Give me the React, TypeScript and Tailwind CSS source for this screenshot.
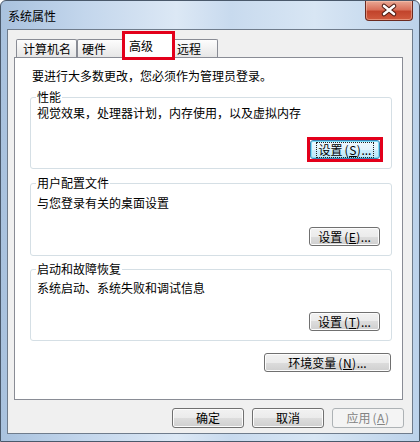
import React from 'react';

const font = "font-['Noto_Sans_CJK_SC','Noto_Sans',sans-serif]";

const btnBase =
  'flex items-center justify-center h-[19px] rounded-[3px] border text-[12px] leading-none';
const btnNormal =
  'border-[#707070] bg-[linear-gradient(#f2f2f2_0%,#ebebeb_50%,#dddddd_50%,#cfcfcf_100%)] shadow-[inset_0_0_0_1px_#fcfcfc] text-black';

const Button: React.FC<{ children: React.ReactNode; className?: string }> = ({ children, className = '' }) => (
  <div className={`${btnBase} ${btnNormal} ${className}`}>{children}</div>
);

const Key: React.FC<{ k: string }> = ({ k }) => (
  <span className="ml-[2px] tracking-[0.5px]">
    (<span className="underline underline-offset-1">{k}</span>)
  </span>
);

const Group: React.FC<{
  title: string;
  desc: string;
  className: string;
  descClass: string;
  children: React.ReactNode;
}> = ({ title, desc, className, descClass, children }) => (
  <fieldset className={`ml-[15px] mr-[10px] pl-[5px] border border-[#d5dfe5] rounded-[3px] ${className}`}>
    <legend className="px-[1px] text-[12px] leading-[14px] text-black">{title}</legend>
    <div className={`pl-[1px] text-[12px] leading-[13px] text-black ${descClass}`}>{desc}</div>
    {children}
  </fieldset>
);

export default function App() {
  return (
    <div
      className={`${font} w-[420px] h-[442px] flex flex-col rounded-t-[6px] border border-[#4a596b] bg-[linear-gradient(to_right,#a9c2de_0%,#c3d6ec_20%,#dce8f5_42%,#c8daee_55%,#d8e6f4_75%,#bcd2ea_100%)]`}
    >
      {/* title bar */}
      <div className="h-[28px] flex items-start justify-between">
        <span className="self-center pl-[7px] pt-[1px] text-[12px] leading-[14px] text-black">系统属性</span>
        <div className="mr-[6px] w-[48px] h-[20px] rounded-b-[4px] border border-t-0 border-[#6b2a20] bg-[linear-gradient(#e9a895_0%,#d9715b_45%,#c2442c_55%,#d05a3e_100%)] shadow-[inset_0_0_0_1px_rgba(255,210,190,0.45)]">
          <svg width="46" height="19" viewBox="0 0 46 19">
            <path d="M18 5 L28 13 M28 5 L18 13" stroke="#4a1810" strokeWidth="4.6" strokeLinecap="round" />
            <path d="M18 5 L28 13 M28 5 L18 13" stroke="#ffffff" strokeWidth="2.6" strokeLinecap="round" />
          </svg>
        </div>
      </div>

      {/* client area */}
      <div className="flex-1 mx-[6px] mb-[7px] flex flex-col bg-[#f0f0f0] border border-[#6f7c8c]">
        {/* tabs */}
        <div className="mt-[1px] ml-[8px] h-[26px] flex items-end text-[12px] text-black">
          <div className="w-[61px] h-[18px] pl-[6px] pt-[1px] flex items-center border-l border-t border-r border-[#898c95] rounded-t-[2px] bg-[linear-gradient(#fdfdfd,#e6e6e6)]">
            计算机名
          </div>
          <div className="w-[45px] h-[18px] pl-[4px] pt-[1px] flex items-center border-l border-t border-[#898c95] rounded-tl-[2px] bg-[linear-gradient(#fdfdfd,#e6e6e6)]">
            硬件
          </div>
          <div className="relative z-10 w-[53px] h-[29px] -mb-[3px] pl-[4px] pt-[5px] border-[3px] border-[#e3001b] bg-white leading-[14px]">
            高级
          </div>
          <div className="w-[43px] h-[18px] pl-[2px] pt-[1px] flex items-center border-t border-r border-[#898c95] rounded-tr-[2px] bg-[linear-gradient(#fdfdfd,#e6e6e6)]">
            远程
          </div>
        </div>

        {/* tab panel */}
        <div className="ml-[6px] mr-[9px] h-[343px] flex flex-col border border-[#898c95] bg-white">
          <div className="pt-[10px] pl-[17px] text-[12px] leading-[16px] text-black">
            要进行大多数更改，您必须作为管理员登录。
          </div>

          <Group title="性能" desc="视觉效果，处理器计划，内存使用，以及虚拟内存" className="mt-[6px] pb-[6px]" descClass="mt-[2px]">
            <div className="mt-[18px] flex justify-end pr-[8px]">
              <div className="border-[3px] border-[#e3001b]">
                <div className="relative w-[70px] h-[19px] flex items-center justify-center rounded-[3px] border border-[#3c7fb1] bg-[linear-gradient(#f0f9fe_0%,#e4f4fd_50%,#cdeefd_50%,#bde6f8_100%)] shadow-[inset_0_0_0_1px_#7fe0f8] text-[12px] leading-none text-black">
                  <span className="px-[2px] py-[1px] border border-dotted border-[#222]">
                    设置<Key k="S" />...
                  </span>
                </div>
              </div>
            </div>
          </Group>

          <Group title="用户配置文件" desc="与您登录有关的桌面设置" className="mt-[7px] pb-[9px]" descClass="mt-[6px]">
            <div className="mt-[18px] flex justify-end pr-[11px]">
              <Button className="w-[71px]">
                设置<Key k="E" />...
              </Button>
            </div>
          </Group>

          <Group title="启动和故障恢复" desc="系统启动、系统失败和调试信息" className="mt-[6px] pb-[9px]" descClass="mt-[5px]">
            <div className="mt-[18px] flex justify-end pr-[11px]">
              <Button className="w-[71px]">
                设置<Key k="T" />...
              </Button>
            </div>
          </Group>

          <div className="mt-[12px] flex justify-end pr-[11px]">
            <Button className="w-[127px]">
              环境变量<Key k="N" />...
            </Button>
          </div>
        </div>

        {/* dialog buttons */}
        <div className="mt-[8px] mr-[8px] flex justify-end gap-[8px]">
          <Button className="w-[72px] h-[20px]">确定</Button>
          <Button className="w-[72px] h-[20px]">取消</Button>
          <div className={`${btnBase} w-[72px] h-[20px] border-[#adb2b5] bg-[#f4f4f4] text-[#838383]`}>
            应用<Key k="A" />
          </div>
        </div>
      </div>
    </div>
  );
}
